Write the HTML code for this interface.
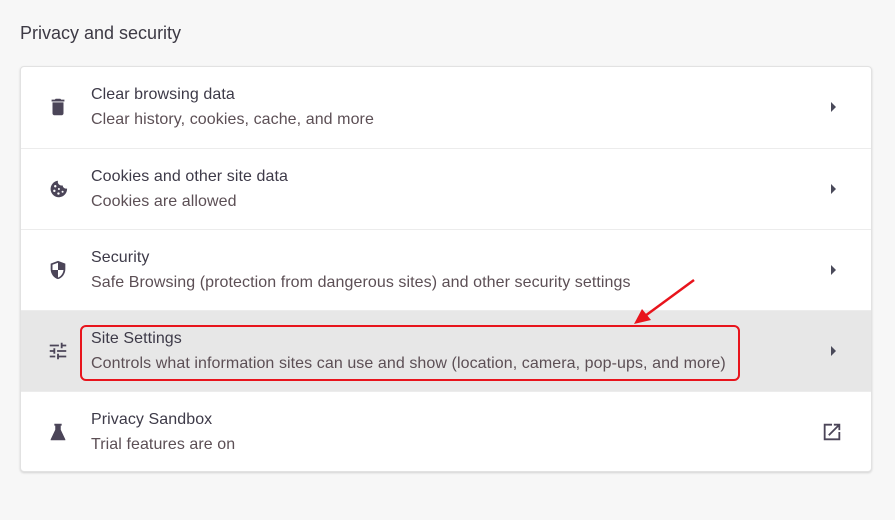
<!DOCTYPE html>
<html><head><style>
body{margin:0;width:895px;height:520px;background:#f7f7f7;font-family:"Liberation Sans",sans-serif;position:relative;overflow:hidden}
h1{position:absolute;left:20px;top:23px;margin:0;font-size:18px;font-weight:normal;color:#3d3a45}
.card{position:absolute;left:20px;top:66px;width:850px;height:404px;background:#fff;border:1px solid #e2e2e2;border-radius:4px;box-shadow:0 1px 2px rgba(0,0,0,.15);overflow:hidden}
.row{position:relative;height:81px;border-top:1px solid #ececec;box-sizing:border-box}
.row:first-child{border-top:none}
.row.hl{background:#e7e7e7}
.t{position:absolute;left:70px;top:19px;font-size:16px;letter-spacing:0.08px;color:#3d3a48}
.s{position:absolute;left:70px;top:44px;font-size:16px;letter-spacing:0.08px;color:#5c4f55}
.ic{position:absolute;left:26px;top:29px;width:22px;height:22px}
.ar{position:absolute;left:810px;top:35px;width:0;height:0;border-top:5px solid transparent;border-bottom:5px solid transparent;border-left:5px solid #4a4a5a}
</style></head><body>
<h1>Privacy and security</h1>
<div class="card">
<div class="row"><svg class="ic" viewBox="0 0 24 24"><path fill="#4b4558" d="M6 19c0 1.1.9 2 2 2h8c1.1 0 2-.9 2-2V7H6v12zM19 4h-3.5l-1-1h-5l-1 1H5v2h14V4z"/></svg><div class="t">Clear browsing data</div><div class="s">Clear history, cookies, cache, and more</div><div class="ar"></div></div>
<div class="row"><svg class="ic" viewBox="0 0 24 24"><path fill="#4b4558" d="M21.9 11.5A4 4 0 0 1 17 8a4 4 0 0 1-5-5 9 9 0 1 0 9.9 8.5z"/><circle cx="9" cy="9" r="1.3" fill="#fff"/><circle cx="8" cy="14" r="1.3" fill="#fff"/><circle cx="13" cy="12" r="1.1" fill="#fff"/><circle cx="12.5" cy="17" r="1.3" fill="#fff"/><circle cx="17" cy="15" r="1.1" fill="#fff"/></svg><div class="t">Cookies and other site data</div><div class="s">Cookies are allowed</div><div class="ar"></div></div>
<div class="row"><svg class="ic" viewBox="0 0 24 24"><path fill="#4b4558" d="M12 2 4 5v6c0 5 3.4 9.7 8 11 4.6-1.3 8-6 8-11V5l-8-3zm0 10h6c-.5 3.9-3 7.3-6 8.3V12H6V6.3l6-2.2V12z"/></svg><div class="t">Security</div><div class="s">Safe Browsing (protection from dangerous sites) and other security settings</div><div class="ar"></div></div>
<div class="row hl"><svg class="ic" viewBox="0 0 24 24"><path fill="#4b4558" d="M3 17v2h6v-2H3zM3 5v2h10V5H3zm10 16v-2h8v-2h-8v-2h-2v6h2zM7 9v2H3v2h4v2h2V9H7zm14 4v-2H11v2h10zm-6-4h2V7h4V5h-4V3h-2v6z"/></svg><div class="t">Site Settings</div><div class="s">Controls what information sites can use and show (location, camera, pop-ups, and more)</div><div class="ar"></div></div>
<div class="row"><svg class="ic" viewBox="0 0 24 24"><path fill="#4b4558" d="M8 3h8v2h-1v4.5l5 10.5V21H4v-1l5-10.5V5H8z"/></svg><div class="t">Privacy Sandbox</div><div class="s">Trial features are on</div><svg style="position:absolute;left:800px;top:29px" width="22" height="22" viewBox="0 0 24 24"><path fill="#4b4558" d="M19 19H5V5h7V3H3v18h18v-9h-2v7zM14 3v2h3.6l-9.8 9.8 1.4 1.4L19 6.4V10h2V3h-7z"/></svg></div>
</div>
<div style="position:absolute;left:80px;top:325px;width:656px;height:52px;border:2px solid #e8141c;border-radius:6px"></div>
<svg style="position:absolute;left:0;top:0" width="895" height="520"><line x1="694" y1="280" x2="645" y2="316" stroke="#e8141c" stroke-width="2.5"/><polygon points="634,324 642,309 651,320" fill="#e8141c"/></svg>
</body></html>
